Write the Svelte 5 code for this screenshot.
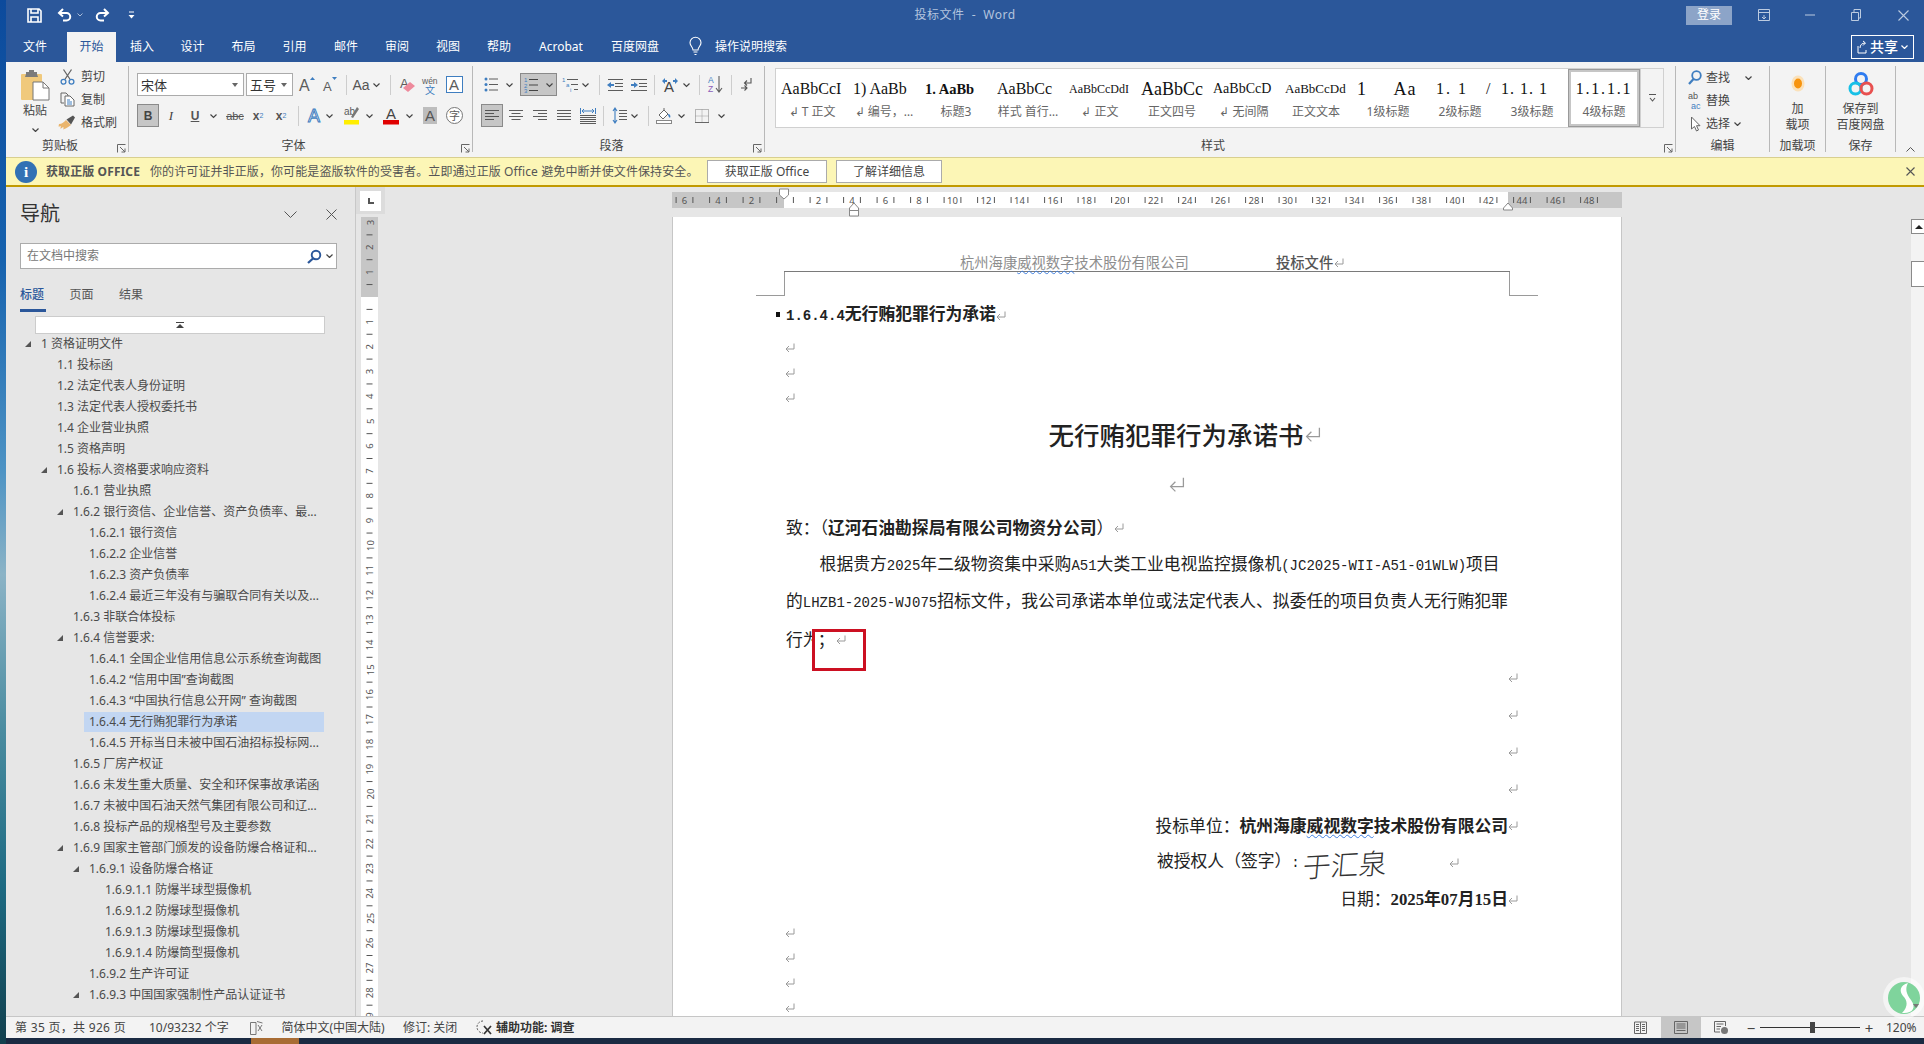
<script>
  const BL = '#3f7ec0', GR = '#5c5c5c';
  const lines = (arr, col = GR) => `<path d="${arr.map(([x1, y, x2]) => `M${x1} ${y}H${x2}`).join('')}" stroke="${col}" stroke-width="1" fill="none"/>`;
  const txt = (s, x, y, size, fill, extra = '') => `<text x="${x}" y="${y}" font-size="${size}" fill="${fill}" font-family="Liberation Sans, Noto Sans CJK SC, sans-serif" ${extra}>${s}</text>`;
  const W = '#ffffff';
  const ICON = {
    chev: [7, 4, `<path d="M.5 .5 3.5 3.5 6.5 .5" fill="none" stroke="#444" stroke-width="1.2"/>`],
    chevw: [7, 4, `<path d="M.5 .5 3.5 3.5 6.5 .5" fill="none" stroke="#fff" stroke-width="1.2"/>`],
    save: [15, 15, `<path d="M1 1H12L14 3V14H1Z M4 1V5H11V1 M4 14V9H11V14" fill="none" stroke="${W}" stroke-width="1.6"/>`],
    undo: [15, 14, `<path d="M6 1 2 5 6 8.5M2 5H9.5A3.7 3.7 0 0 1 9.5 12.5H6" fill="none" stroke="${W}" stroke-width="2"/>`],
    redo: [15, 14, `<path d="M9 1 13 5 9 8.5M13 5H5.5A3.7 3.7 0 0 0 5.500 12.5H9" fill="none" stroke="${W}" stroke-width="2"/>`],
    undoc: [6, 4, `<path d="M.5 .5 3 3 5.500 .5" fill="none" stroke="#a9bcd8" stroke-width="1"/>`],
    qat: [7, 8, `<path d="M1 1H6" stroke="${W}"/><path d="M.5 4H6.500L3.500 7.500Z" fill="${W}"/>`],
    bulb: [13, 19, `<path d="M4 13C4 10 1 9 1 5.800A5.500 5.500 0 0 1 12 5.800C12 9 9 10 9 13ZM4.500 15H8.500M5.500 17.500H7.500" fill="none" stroke="${W}" stroke-width="1.100"/>`],
    paste: [30, 32, `<rect x="1" y="5" width="21" height="26" rx="1" fill="#f0c97c"/><path d="M6 5V3H9V1H14V3H17V5L18 8H5Z" fill="#7b7b7b"/><path d="M13 13H23L29 19V31H13Z" fill="#fff" stroke="#777"/><path d="M23 13V19H29" fill="none" stroke="#777"/>`],
    cut: [15, 16, `<path d="M4.800 10.500 11.500 .5M10.200 10.500 3.500 .5" stroke="#666" stroke-width="1.300" fill="none"/><circle cx="3.500" cy="12.800" r="2.400" fill="none" stroke="${BL}" stroke-width="1.300"/><circle cx="11.500" cy="12.800" r="2.400" fill="none" stroke="${BL}" stroke-width="1.300"/>`],
    copy: [15, 15, `<path d="M1 1H6L8 3V4M1 1V11H4" fill="none" stroke="#666"/><path d="M5 4H10L14 8V14H5Z" fill="#fff" stroke="#666"/><path d="M7 8H10M7 10H12M7 12H12" stroke="${BL}"/>`],
    brush: [18, 15, `<path d="M1 9C4 9 6 7 8 5L13 10C10 12 8 14 5 14.500C6 13 5.500 12 5 12C4 13 3 13.500 2 13.500C3 12.500 3 11.500 2.500 11C2 11.500 1.500 11.500 .5 11.500Z" fill="#eab56d"/><path d="M8.500 4.500 15 .5 17 2.500 13 9.500Z" fill="#555"/>`],
    launch: [9, 9, `<path d="M.5 8.500V.5H8.500M3 3 8 8M8 4.500V8H4.500" fill="none" stroke="#666"/>`],
    grow: [18, 17, txt('A', 1, 15, 16, GR) + `<path d="M12 4H17L14.500 1Z" fill="${BL}"/>`],
    shrink: [16, 17, txt('A', 1, 15, 13, GR) + `<path d="M10 1H15L12.500 4Z" fill="${BL}"/>`],
    eraser: [17, 17, txt('A', 1, 12, 13, GR) + `<path d="M4 12 11 6 16 10 9 16Z" fill="#ee8a9c"/>`],
    wen: [17, 18, txt('wén', 0, 8, 8.5, GR) + txt('文', 3, 18, 10, BL)],
    abox: [17, 17, `<rect x=".5" y=".5" width="16" height="16" fill="#fff" stroke="${BL}"/>` + txt('A', 3, 14, 15, GR)],
    glow: [16, 18, `<text x="2" y="15" font-size="18" font-family="Liberation Sans,sans-serif" fill="#fff" stroke="${BL}" stroke-width="1">A</text>`],
    hl: [16, 19, txt('ab', 0, 9, 10, GR) + `<path d="M7 11 13 1 15 3 9 12Z" fill="#777"/><rect x="0" y="14" width="15" height="4.500" fill="#ffee00"/>`],
    ared: [16, 19, txt('A', 3, 13, 15, '#444') + `<rect x="0" y="14" width="16" height="4.500" fill="#e00000"/>`],
    agray: [14, 17, `<rect width="14" height="17" fill="#bdbdbd"/>` + txt('A', 2, 14, 15, '#555')],
    zi: [17, 17, `<circle cx="8.500" cy="8.500" r="8" fill="#fff" stroke="#777"/>` + txt('字', 3, 13, 11, GR)],
    bullets: [15, 15, `<circle cx="2" cy="2" r="1.500" fill="${BL}"/><circle cx="2" cy="7.500" r="1.500" fill="${BL}"/><circle cx="2" cy="13" r="1.500" fill="${BL}"/>` + lines([[5, 2, 14], [5, 7.5, 14], [5, 13, 14]])],
    numbers: [14, 16, txt('1', 0, 5, 6, BL) + txt('2', 0, 10.5, 6, BL) + txt('3', 0, 16, 6, BL) + lines([[5, 2.5, 14], [5, 8, 14], [5, 13.5, 14]], '#444')],
    multi: [17, 15, txt('1', 0, 5, 6, BL) + txt('a', 4, 10, 6, BL) + txt('i', 8, 15, 6, BL) + lines([[5, 2.5, 16], [9, 7.5, 16], [12, 12.5, 16]])],
    dec: [16, 12, lines([[1, .5, 16], [8, 4.5, 16], [8, 7.5, 16], [1, 11.5, 16]]) + `<path d="M0 6 4 3V9Z" fill="${BL}"/><path d="M3 6H7" stroke="${BL}" stroke-width="2"/>`],
    inc: [16, 12, lines([[0, .5, 16], [8, 4.5, 16], [8, 7.5, 16], [0, 11.5, 16]]) + `<path d="M7 6 3 3V9Z" fill="${BL}"/><path d="M0 6H4" stroke="${BL}" stroke-width="2"/>`],
    acc: [16, 15, txt('A', 2, 15, 15, '#444') + `<path d="M0 4 3 1V3H5V5H3V7ZM16 4 13 1V3H11V5H13V7Z" fill="${BL}"/>`],
    sort: [15, 17, txt('A', 0, 7, 8.5, BL) + txt('Z', 0, 16, 8.500, '#8b5fb8') + `<path d="M11 0V15M8 12 11 16 14 12" fill="none" stroke="${GR}" stroke-width="1.100"/>`],
    marks: [11, 14, `<path d="M10 0V5H4M6 2.500 3.500 5 6 7.500M0 10H6M3.500 7.500 6 10 3.500 12.500" fill="none" stroke="#555" stroke-width="1.100"/>`],
    left: [14, 11, lines([[0, .5, 14], [0, 3.5, 9], [0, 6.5, 14], [0, 9.5, 9]], '#555')],
    center: [14, 11, lines([[0, .5, 14], [2.5, 3.5, 11.5], [0, 6.5, 14], [2.5, 9.5, 11.5]])],
    right: [14, 11, lines([[0, .5, 14], [5, 3.5, 14], [0, 6.5, 14], [5, 9.5, 14]])],
    just: [14, 11, lines([[0, .5, 14], [0, 3.5, 14], [0, 6.5, 14], [0, 9.5, 14]])],
    dist: [16, 16, `<path d="M.5 0V6M15.500 0V6M2 3H14M4 1 2 3 4 5M12 1 14 3 12 5" fill="none" stroke="${BL}"/>` + lines([[0, 7.5, 16], [0, 9.5, 16], [0, 11.5, 16], [0, 13.5, 16], [0, 15.5, 16]])],
    spacing: [15, 17, `<path d="M3 1V16M1 4 3 1 5 4M1 13 3 16 5 13" fill="none" stroke="${BL}" stroke-width="1.100"/>` + lines([[7, 3.5, 15], [7, 6.5, 15], [7, 9.5, 15], [7, 12.5, 15]])],
    shade: [16, 16, `<path d="M3 7 8 2 12 6 7 11Z" fill="#fff" stroke="#666"/><path d="M8 2V0" stroke="#666"/><path d="M12 6C14 6 15 8 14 10 13 9 12 8 12 6Z" fill="${BL}"/><rect x=".5" y="12.500" width="15" height="3" fill="#fff" stroke="#888"/>`],
    borders: [14, 14, `<rect x=".5" y=".5" width="13" height="13" fill="none" stroke="#777" stroke-dasharray="1 1"/><path d="M7 .5V13.500M.5 7H13.500" stroke="#999" stroke-dasharray="1 1"/><path d="M0 13.500H14" stroke="#666"/>`],
    find: [14, 15, `<circle cx="8.500" cy="5.500" r="4.300" fill="none" stroke="${BL}" stroke-width="1.800"/><path d="M5.500 9 1 14" stroke="${BL}" stroke-width="2.200"/>`],
    replace: [15, 19, txt('ab', 0, 8, 9, '#555') + txt('ac', 3, 18, 9, BL)],
    select: [11, 16, `<path d="M1.500 1V13L4.500 10.500 6.500 15 8.500 14 6.500 9.700H10Z" fill="#fff" stroke="#666"/>`],
    dot: [14, 17, `<ellipse cx="7" cy="8.500" rx="6.500" ry="8" fill="#fdd9a0" opacity=".7"/><ellipse cx="7" cy="8.500" rx="4" ry="5" fill="#f7940f"/>`],
    baidu: [26, 26, `<circle cx="13" cy="8" r="5.500" fill="none" stroke="#2f7cf0" stroke-width="3"/><circle cx="7.500" cy="17.500" r="5.500" fill="none" stroke="#18c0e6" stroke-width="3"/><circle cx="18.500" cy="17.500" r="5.500" fill="none" stroke="#e8504f" stroke-width="3"/>`],
    ribbondisp: [12, 12, `<path d="M.5 .5H11.500V11.500H.5ZM.5 3.500H11.500M6 6V10M4 8 6 10 8 8" fill="none" stroke="#bccbe0"/>`],
    min: [10, 2, `<path d="M0 1H10" stroke="#bccbe0"/>`],
    restore: [10, 12, `<path d="M.5 3.500H7.500V11.500H.5ZM3 3.500V.5H9.500V9H7.500" fill="none" stroke="#bccbe0"/>`],
    close: [11, 11, `<path d="M.5 .5 10.500 10.500M10.500 .5 .5 10.500" stroke="#bccbe0" stroke-width="1.100"/>`],
    sharei: [10, 14, `<path d="M1 6V13H9V10M3 8C3 5 5 3 8 3M6 1 8.500 3 6 5.500" fill="none" stroke="#fff"/>`],
    xdark: [9, 9, `<path d="M.5 .5 8.500 8.500M8.500 .5 .5 8.500" stroke="#555" stroke-width="1.100"/>`],
    book: [13, 14, `<path d="M.5 1.500H6V13.500H.5ZM7 .5 12.500 2" fill="none" stroke="#777"/><path d="M8 4 12 10M12 4 8 10" stroke="#777"/>`],
    access: [16, 15, `<path d="M6 1A6 6 0 0 0 6 13" fill="none" stroke="#555" stroke-dasharray="2 1.500"/><path d="M7 6 14 14M14 6 7 14" stroke="#333" stroke-width="1.700"/>`],
    read: [13, 13, `<path d="M.5 1H6.500V12.500H.5ZM6.500 1H12.500V12.500H6.500ZM2 3.500H5M2 5.500H5M2 7.500H5M2 9.500H5M8 3.500H11M8 5.500H11M8 7.500H11M8 9.500H11" fill="none" stroke="#666"/>`],
    print: [14, 13, `<path d="M.5 .5H13.500V12.500H.5ZM2.500 3H11.500M2.500 5H11.500M2.500 7H11.500M2.500 9.500H11.500" fill="none" stroke="#666"/>`],
    web: [14, 13, `<path d="M.5 .5H11.500V5M.5 .5V11H6M2.500 3H9.500M2.500 5.500H7M2.500 8H6" fill="none" stroke="#666"/><circle cx="10.500" cy="9.500" r="3.500" fill="#777"/>`],
    search: [15, 15, `<circle cx="9" cy="6" r="4.300" fill="none" stroke="#2b579a" stroke-width="1.900"/><path d="M6 9.500 1 14" stroke="#2b579a" stroke-width="2.300"/>`],
    vee: [13, 7, `<path d="M.5 .5 6.500 6.500 12.500 .5" fill="none" stroke="#555"/>`],
    navx: [11, 11, `<path d="M.5 .5 10.500 10.500M10.500 .5 .5 10.500" stroke="#555"/>`],
    topbtn: [8, 6, `<path d="M0 .5H8" stroke="#444"/><path d="M0 6 4 2 8 6Z" fill="#444"/>`],
    tri: [6, 6, `<path d="M6 0V6H0Z" fill="#555"/>`],
    upc: [9, 5, `<path d="M.5 4.500 4.500 .5 8.500 4.500" fill="none" stroke="#555"/>`],
    morestyles: [7, 8, `<path d="M0 .5H7" stroke="#555"/><path d="M1 4 3.500 7 6 4" fill="none" stroke="#555" stroke-width="1.100"/>`]
  };

  const flow = (start, items) => {
    let p = start;
    return items.map((i) => {
      const x = i.c - i.w / 2;
      const ml = x - p;
      p = x + i.w;
      return { ...i, ml };
    });
  };
  const ic = (k, c, w = 18, cl = '') => ({ k, c, w, cl });
  const tx = (t, c, w, cl = '') => ({ t, c, w, cl });
  const sep = (c) => ({ c, w: 1, cl: 'sep' });
  const ch = (c) => ic('chev', c, 8);

  const qatRow = [
    ic('save', 34), ic('undo', 64), ic('undoc', 80, 7), ic('redo', 102), ic('qat', 131, 8),
    tx('投标文件  -  Word', 965, 140, 'title'),
    tx('登录', 1709, 46, 'signin'),
    ic('ribbondisp', 1764), ic('min', 1810), ic('restore', 1856), ic('close', 1903)
  ];
  const tabRow = [
    tx('文件', 35, 40), tx('开始', 91.5, 49, 'active'), tx('插入', 142, 40), tx('设计', 192.5, 40),
    tx('布局', 243.5, 40), tx('引用', 294.5, 40), tx('邮件', 346, 40), tx('审阅', 397, 40),
    tx('视图', 448, 40), tx('帮助', 499, 40), tx('Acrobat', 561, 56), tx('百度网盘', 635, 60),
    ic('bulb', 695), tx('操作说明搜索', 751, 76)
  ];
  const font1 = [
    { c: 190.5, w: 107, combo: '宋体' }, { c: 269.5, w: 47, combo: '五号' },
    ic('grow', 307), ic('shrink', 330), sep(346), tx('Aa', 361, 22, 'aa'), ch(376), sep(390),
    ic('eraser', 407), ic('wen', 430), ic('abox', 454)
  ];
  const font2 = [
    tx('B', 148, 22, 'on bold'), tx('I', 171, 14, 'ital'), tx('U', 195, 14, 'und'), ch(213), tx('abc', 235, 24, 'strike'),
    { t: 'x', sub: '2', c: 258, w: 16, cl: 'bx' }, { t: 'x', sup: '2', c: 281, w: 16, cl: 'bx' },
    sep(298), ic('glow', 314), ch(329), ic('hl', 352), ch(369), ic('ared', 391), ch(409), ic('agray', 430), ic('zi', 454)
  ];
  const para1 = [
    ic('bullets', 491), ch(509), { k: 'numbers', k2: 'chev', c: 538.5, w: 37, cl: 'on' }, ic('multi', 570), ch(585), sep(599),
    ic('dec', 615), ic('inc', 639), sep(654), ic('acc', 670), ch(686), sep(699), ic('sort', 715), sep(731), ic('marks', 746)
  ];
  const para2 = [
    ic('left', 492, 22, 'on'), ic('center', 516), ic('right', 540), ic('just', 564), ic('dist', 588), sep(603),
    ic('spacing', 619), ch(634), sep(648), ic('shade', 664), ch(681), ic('borders', 702), ch(721)
  ];
  const styles = [
    { p: 'AaBbCcI', l: '↲ T 正文', f: 's16' }, { p: '1) AaBb', l: '↲ 编号，…', f: 's16' }, { p: '1. AaBb', l: '标题3', f: 's145 strong' },
    { p: 'AaBbCc', l: '样式 首行…', f: 's16' }, { p: 'AaBbCcDdI', l: '↲ 正文', f: 's12' }, { p: 'AaBbCc', l: '正文四号', f: 's18' },
    { p: 'AaBbCcD', l: '↲ 无间隔', f: 's14' }, { p: 'AaBbCcDd', l: '正文文本', f: 's13' }, { p: '1     Aa', l: '1级标题', f: 's18 wide' },
    { p: '1. 1   /', l: '2级标题', f: 's16 wide w2' }, { p: '1. 1. 1', l: '3级标题', f: 's16 wide' }, { p: '1.1.1.1', l: '4级标题', f: 's16 wide w3', sel: true }
  ];
  const tree = [
    [0, '1 资格证明文件', 1], [1, '1.1 投标函'], [1, '1.2 法定代表人身份证明'], [1, '1.3 法定代表人授权委托书'], [1, '1.4 企业营业执照'], [1, '1.5 资格声明'],
    [1, '1.6 投标人资格要求响应资料', 1], [2, '1.6.1 营业执照'], [2, '1.6.2 银行资信、企业信誉、资产负债率、最...', 1], [3, '1.6.2.1 银行资信'], [3, '1.6.2.2 企业信誉'], [3, '1.6.2.3 资产负债率'],
    [3, '1.6.2.4 最近三年没有与骗取合同有关以及...'], [2, '1.6.3 非联合体投标'], [2, '1.6.4 信誉要求:', 1], [3, '1.6.4.1 全国企业信用信息公示系统查询截图'], [3, '1.6.4.2 “信用中国”查询截图'],
    [3, '1.6.4.3 “中国执行信息公开网” 查询截图'], [3, '1.6.4.4 无行贿犯罪行为承诺', 0, 1], [3, '1.6.4.5 开标当日未被中国石油招标投标网...'], [2, '1.6.5 厂房产权证'], [2, '1.6.6 未发生重大质量、安全和环保事故承诺函'],
    [2, '1.6.7 未被中国石油天然气集团有限公司和辽...'], [2, '1.6.8 投标产品的规格型号及主要参数'], [2, '1.6.9 国家主管部门颁发的设备防爆合格证和...', 1], [3, '1.6.9.1 设备防爆合格证', 1],
    [4, '1.6.9.1.1 防爆半球型摄像机'], [4, '1.6.9.1.2 防爆球型摄像机'], [4, '1.6.9.1.3 防爆球型摄像机'], [4, '1.6.9.1.4 防爆筒型摄像机'], [3, '1.6.9.2 生产许可证'], [3, '1.6.9.3 中国国家强制性产品认证证书', 1]
  ];
  const statusRow = [
    tx('第 35 页，共 926 页', 75, 120, 'lft st1'), tx('10/93232 个字', 191, 84, 'lft'), ic('book', 256, 14), tx('简体中文(中国大陆)', 334.5, 106, 'lft'),
    tx('修订: 关闭', 432, 58, 'lft'), ic('access', 485, 16), tx('辅助功能: 调查', 537, 82, 'lft bolder'),
    ic('read', 1640.5, 16), ic('print', 1681, 40, 'view-on'), ic('web', 1721, 16),
    tx('−', 1751, 10, 'zm'), { c: 1810, w: 100, cl: 'slider' }, tx('+', 1869, 10, 'zm'), tx('120%', 1902, 32, 'lft')
  ];

  const hx = (n) => 113 + n * 16.75;
  const hNums = [-6, -4, -2, 0, 2, 4, 6, 8, 10, 12, 14, 16, 18, 20, 22, 24, 26, 28, 30, 32, 34, 36, 38, 40, 42, 44, 46, 48];
  const vy = (n) => 80 + n * 24.85;
  const vNums = Array.from({ length: 33 }, (_, i) => i - 3);
</script>

{#snippet icon(k)}
  <svg width={ICON[k][0]} height={ICON[k][1]} viewBox="0 0 {ICON[k][0]} {ICON[k][1]}">{@html ICON[k][2]}</svg>
{/snippet}

{#snippet row(start, items, cls)}
  <div class="row {cls}">
    {#each flow(start, items) as i}
      <span class="cell {i.cl || ''}" style:margin-left="{i.ml}px" style:width="{i.w}px">
        {#if i.combo}
          <span class="combo"><span>{i.combo}</span><i class="caret"></i></span>
        {:else if i.k}
          {@render icon(i.k)}
          {#if i.k2}<span class="k2">{@render icon(i.k2)}</span>{/if}
        {:else if i.t}
          {i.t}{#if i.sub}<sub>{i.sub}</sub>{/if}{#if i.sup}<sup>{i.sup}</sup>{/if}
        {/if}
      </span>
    {/each}
  </div>
{/snippet}

{#snippet mark(big)}
  <svg class="ret" class:big width={big ? 16 : 10} height={big ? 16 : 10} viewBox="0 0 10 10"><path d="M9 .5V6H1M4 3 1 6 4 9" fill="none" stroke="#9a9a9a" stroke-width={big ? 0.8 : 1}/></svg>
{/snippet}

<div class="screen">
  <div class="wall"></div>
  <div class="win">
    {@render row(6, qatRow, 'qat')}
    <div class="tabline">
      {@render row(6, tabRow, 'tabs')}
      <button class="share">{@render icon('sharei')}<b>共享</b>{@render icon('chevw')}</button>
    </div>

    <div class="ribbon">
      <section class="grp clip">
        <div class="body clipbody">
          <div class="paste">{@render icon('paste')}<span>粘贴</span>{@render icon('chev')}</div>
          <div class="mini">
            <div class="tool"><span class="ti">{@render icon('cut')}</span>剪切</div>
            <div class="tool"><span class="ti">{@render icon('copy')}</span>复制</div>
            <div class="tool"><span class="ti">{@render icon('brush')}</span>格式刷</div>
          </div>
        </div>
        <div class="glabel"><span>剪贴板</span><span class="launch">{@render icon('launch')}</span></div>
      </section>
      <section class="grp fontg">
        <div class="body">{@render row(129, font1, 'r')}{@render row(129, font2, 'r')}</div>
        <div class="glabel"><span>字体</span><span class="launch">{@render icon('launch')}</span></div>
      </section>
      <section class="grp parag">
        <div class="body">{@render row(473, para1, 'r')}{@render row(473, para2, 'r')}</div>
        <div class="glabel"><span>段落</span><span class="launch">{@render icon('launch')}</span></div>
      </section>
      <section class="grp styleg">
        <div class="body stylebody">
          <div class="gallery">
            {#each styles as s}
              <div class="style" class:sel={s.sel}>
                <div class="prev {s.f}">{s.p}</div>
                <div class="slabel">{s.l}</div>
              </div>
            {/each}
            <div class="gscroll">{@render icon('morestyles')}</div>
          </div>
        </div>
        <div class="glabel"><span>样式</span><span class="launch">{@render icon('launch')}</span></div>
      </section>
      <section class="grp editg">
        <div class="body editbody">
          <div class="tool"><span class="te">{@render icon('find')}</span>查找<span class="tc long">{@render icon('chev')}</span></div>
          <div class="tool"><span class="te">{@render icon('replace')}</span>替换</div>
          <div class="tool"><span class="te">{@render icon('select')}</span>选择<span class="tc">{@render icon('chev')}</span></div>
        </div>
        <div class="glabel center"><span>编辑</span></div>
      </section>
      <section class="grp addg">
        <div class="body big"><span class="bigicon">{@render icon('dot')}</span><span>加</span><span>载项</span></div>
        <div class="glabel center"><span>加载项</span></div>
      </section>
      <section class="grp saveg">
        <div class="body big"><span class="bigicon">{@render icon('baidu')}</span><span>保存到</span><span>百度网盘</span></div>
        <div class="glabel center"><span>保存</span></div>
      </section>
      <div class="collapse">{@render icon('upc')}</div>
    </div>

    <div class="infobar">
      <span class="iicon">i</span>
      <b>获取正版 OFFICE</b>
      <span class="msg">你的许可证并非正版，你可能是盗版软件的受害者。立即通过正版 Office 避免中断并使文件保持安全。</span>
      <button class="ibtn btn1">获取正版 Office</button>
      <button class="ibtn btn2">了解详细信息</button>
      <span class="ix">{@render icon('xdark')}</span>
    </div>

    <div class="main">
      <aside class="nav">
        <div class="navhead"><h2>导航</h2><span class="nv">{@render icon('vee')}</span><span class="nx">{@render icon('navx')}</span></div>
        <div class="searchbox"><span>在文档中搜索</span>{@render icon('search')}<span class="sc">{@render icon('chev')}</span></div>
        <div class="navtabs"><span class="cur">标题</span><span>页面</span><span>结果</span></div>
        <div class="upbtn">{@render icon('topbtn')}</div>
        <ul class="tree">
          {#each tree as [lvl, text, tri, sel]}
            <li class="lv{lvl}">
              <span class="tw">{#if tri}{@render icon('tri')}{/if}</span>
              <span class="node" class:selected={sel}>{text}</span>
            </li>
          {/each}
        </ul>
      </aside>

      <div class="vrule">
        <div class="corner"><div class="cornerin"><span class="ell"></span></div></div>
        <svg class="vsvg" width="17" height="800" viewBox="0 0 17 800">
          <rect width="17" height="80" fill="#c6c6c6"/>
          <rect y="80" width="17" height="720" fill="#fff"/>
          {#each vNums as n}
            {#if n !== 0}
              <text transform="rotate(-90 9 {vy(n)})" x="9" y={vy(n) + 3.500} text-anchor="middle" font-size="9.500" fill="#555" font-family="Noto Sans, sans-serif">{Math.abs(n)}</text>
            {/if}
            <path d="M5.500 {vy(n) + 12.400}H11.500" stroke="#555"/>
          {/each}
        </svg>
      </div>

      <div class="canvas">
        <svg class="hsvg" width="950" height="30" viewBox="0 0 950 30">
          <rect y="5" width="112" height="16" fill="#c6c6c6"/>
          <rect x="112" y="5" width="724" height="16" fill="#fff"/>
          <rect x="836" y="5" width="114" height="16" fill="#c6c6c6"/>
          {#each hNums as n}
            {#if n !== 0}
              <text x={hx(n)} y="17" text-anchor="middle" font-size="9.500" fill="#555" font-family="Noto Sans, sans-serif">{Math.abs(n)}</text>
            {/if}
            <path d="M{hx(n) - 8.400} 10V16M{hx(n) + 8.400} 10V16" stroke="#555"/>
          {/each}
          <path d="M107.500 2H116.500V8L112 12 107.500 8Z" fill="#fff" stroke="#888"/>
          <path d="M177.500 21L182 16 186.500 21V29H177.500ZM177.500 23.500H186.500" fill="#fff" stroke="#888"/>
          <path d="M831.500 21L836 16 840.500 21V23H831.500Z" fill="#fff" stroke="#888"/>
        </svg>
        <article class="page">
          <header class="dochead"><span class="hgray">杭州海康<u>威视数字</u>技术股份有限公司</span><span class="hdark">投标文件</span>{@render mark()}</header>
          <div class="crop"><i class="cl"></i><i class="cr"></i></div>

          <div class="s h1"><span class="sq"></span><strong><span class="lat">1.6.4.4</span>无行贿犯罪行为承诺</strong>{@render mark()}</div>
          <div class="s">{@render mark()}</div>
          <div class="s">{@render mark()}</div>
          <div class="s">{@render mark()}</div>
          <div class="tt t1"><span>无行贿犯罪行为承诺书</span>{@render mark(true)}</div>
          <div class="tt t2">{@render mark(true)}</div>
          <div class="to">致：（<strong>辽河石油勘探局有限公司物资分公司</strong>）{@render mark()}</div>
          <p class="l indent para1"><span>根据贵方<span class="lat">2025</span>年二级物资集中采购<span class="lat">A51</span>大类工业电视监控摄像机<span class="lat">(JC2025-WII-A51-01WLW)</span>项目</span></p>
          <p class="l"><span>的<span class="lat">LHZB1-2025-WJ075</span>招标文件，我公司承诺本单位或法定代表人、拟委任的项目负责人无行贿犯罪</span></p>
          <p class="l"><span>行<span class="cut">为</span><span class="semi">；</span></span>{@render mark()}</p>
          <div class="l rt gap1">{@render mark()}</div>
          <div class="l rt">{@render mark()}</div>
          <div class="l rt">{@render mark()}</div>
          <div class="l rt">{@render mark()}</div>
          <div class="l rt"><span>投标单位：<strong>杭州海康<u>威视数字</u>技术股份有限公司</strong></span>{@render mark()}</div>
          <div class="l sign"><span>被授权人（签字）<span class="lat">:</span></span><span class="signature">于汇泉</span>{@render mark()}</div>
          <div class="l rt"><span>日期：<strong><span class="num">2025</span>年<span class="num">07</span>月<span class="num">15</span>日</strong></span>{@render mark()}</div>
          <div class="s gap2">{@render mark()}</div>
          <div class="s">{@render mark()}</div>
          <div class="s">{@render mark()}</div>
          <div class="s">{@render mark()}</div>

          <div class="redbox"></div>
        </article>
      </div>

      <div class="vscroll">
        <div class="sup"><i></i></div>
        <div class="sthumb"></div>
      </div>
    </div>

    {@render row(6, statusRow, 'status')}
    <div class="strip"><i></i></div>
  </div>

  <div class="floatball">
    <div class="ballin"><svg width="32" height="32" viewBox="0 0 32 32"><path d="M20 1C12 3 11 9 15 14C19 18 21 24 14 31C24 32 29 26 23 18C18 12 17 6 20 1Z" fill="#fff"/></svg></div>
    <i class="balltri"></i>
  </div>
</div>

<style>
  :global(body) { margin: 0; background: #e6e6e6; }
  :global(*) { box-sizing: border-box; }
  .screen {
    position: relative; display: flex; width: 1924px; height: 1044px; overflow: hidden;
    font: 12px/16px "Noto Sans", "Noto Sans CJK SC", sans-serif; color: #444;
  }
  .wall { width: 6px; background: linear-gradient(#0c4a9c 0%, #1662ae 25%, #4d93c4 45%, #8bb3c6 55%, #4a8ca0 70%, #1d6a82 85%, #12404e 100%); }
  .win { width: 1918px; display: flex; flex-direction: column; }

  .row { display: flex; align-items: center; }
  .cell { display: flex; align-items: center; justify-content: center; flex: none; white-space: nowrap; }
  .cell svg { display: block; flex: none; overflow: visible; }

  .qat { height: 32px; background: #2b579a; padding-bottom: 2px; color: #fff; }
  .title { color: #b3c4de; white-space: pre; letter-spacing: .5px; }
  .signin { height: 19px; background: #8ca4c8; color: #fff; }
  .tabline { position: relative; height: 30px; background: #2b579a; }
  .tabs { height: 30px; color: #fff; }
  .tabs .cell { height: 30px; padding-bottom: 1px; }
  .tabs .active { background: #f3f3f3; color: #2b579a; }
  .share {
    position: absolute; left: 1845px; top: 3px; width: 63px; height: 24px; display: flex; align-items: center; justify-content: center; gap: 3px;
    background: transparent; border: 1px solid #fff; color: #fff; padding: 0; font: inherit;
  }
  .share b { font-weight: 500; font-size: 14px; }

  .ribbon { display: flex; height: 95px; background: #f3f3f3; padding-top: 4px; }
  .grp { height: 86px; flex: none; border-right: 1px solid #b8b8b8; display: flex; flex-direction: column; }
  .clip { width: 123px; }
  .fontg { width: 344px; }
  .parag { width: 292px; }
  .styleg { width: 911px; }
  .editg { width: 94px; }
  .addg { width: 56px; }
  .saveg { width: 70px; }
  .body { height: 72px; flex: none; padding-top: 7px; display: flex; flex-direction: column; gap: 8px; color: #444; }
  .r { height: 23px; }
  .glabel { height: 14px; display: flex; line-height: 16px; color: #444; }
  .glabel > span:first-child { flex: 1; text-align: center; }
  .launch { width: 14px; display: flex; align-items: center; justify-content: center; padding-top: 6px; }
  .launch svg { display: block; }

  .clipbody { flex-direction: row; padding: 0; gap: 0; }
  .paste { width: 44px; margin-left: 7px; display: flex; flex-direction: column; align-items: center; padding-top: 3px; }
  .paste span { margin-top: 2px; }
  .paste svg:last-child { margin-top: 9px; }
  .mini { display: flex; flex-direction: column; margin-top: -1px; }
  .tool { height: 23px; display: flex; align-items: center; white-space: nowrap; }
  .ti { width: 18px; margin-right: 5px; margin-left: 1px; display: flex; justify-content: center; }

  .sep { height: 20px; background: #cdcdcd; }
  .on { height: 23px; background: #c6c6c6; border: 1px solid #8a8a8a; gap: 8px; }
  .bold { font: 700 12px "Liberation Sans", sans-serif; color: #444; }
  .ital { font: italic 13px "Liberation Serif", serif; }
  .und { font: 700 12px "Liberation Sans", sans-serif; text-decoration: underline; color: #555; }
  .strike { font: 11px "Liberation Sans", sans-serif; text-decoration: line-through; color: #555; }
  .bx { font: 700 12px "Liberation Sans", sans-serif; color: #555; }
  .bx sub, .bx sup { font-size: 7px; font-weight: 400; color: #3f7ec0; line-height: 0; }
  .aa { font: 14px "Liberation Sans", sans-serif; color: #555; }
  .combo { width: 100%; height: 23px; display: flex; align-items: center; justify-content: space-between; padding: 0 5px 0 3px; background: #fff; border: 1px solid #ababab; color: #333; font-size: 13px; }
  .caret { width: 0; height: 0; border: 3px solid transparent; border-top: 4px solid #666; border-bottom: 0; }

  .stylebody { padding: 2px 0 0 10px; }
  .gallery { width: 889px; height: 60px; display: flex; background: #fff; border: 1px solid #d0d0d0; }
  .style { width: 72px; flex: none; height: 58px; padding-top: 7px; text-align: center; border: 3px solid transparent; }
  .style.sel { border-color: #c6c6c6; outline: 1px solid #9a9a9a; outline-offset: -1px; }
  .prev { width: 62px; margin: 0 auto; height: 20px; overflow: hidden; white-space: nowrap; line-height: 20px; color: #111; font-family: "Liberation Serif", serif; text-align: left; }
  .s12 { font-size: 12px; } .s13 { font-size: 13px; } .s14 { font-size: 14px; } .s145 { font-size: 14.5px; } .s16 { font-size: 16px; } .s18 { font-size: 18px; }
  .strong { font-weight: 700; }
  .wide { letter-spacing: 1px; white-space: pre; }
  .w2 { letter-spacing: 2px; padding-left: 7px; }
  .w3 { letter-spacing: 1.800px; text-align: center; }
  .slabel { margin-top: 5px; line-height: 16px; height: 16px; color: #666; white-space: nowrap; }
  .gscroll { flex: 1; border-left: 1px solid #d0d0d0; background: #f3f3f3; display: flex; align-items: flex-start; justify-content: center; padding-top: 25px; }

  .editbody { padding: 0; gap: 0; }
  .te { width: 22px; margin-left: 8px; margin-right: 0; display: flex; justify-content: center; }
  .tc { margin-left: 4px; display: flex; }
  .tc.long { margin-left: 15px; }
  .big { padding-top: 0; gap: 0; align-items: center; }
  .bigicon { height: 35px; display: flex; align-items: center; justify-content: center; }
  .glabel.center { justify-content: center; }
  .collapse { width: 28px; display: flex; justify-content: center; padding-top: 81px; }
  .collapse svg { display: block; }

  .infobar { height: 30px; display: flex; align-items: center; background: #fcf6b6; border-top: 1px solid #d8cf8f; border-bottom: 2px solid #c19a00; }
  .iicon { width: 22px; height: 22px; margin-left: 9px; border-radius: 50%; background: #3271b4; color: #fff; font: 700 15px/22px "Liberation Serif", serif; text-align: center; flex: none; }
  .infobar b { margin-left: 9px; color: #555; font-weight: 700; white-space: nowrap; letter-spacing: .1px; }
  .msg { margin-left: 10px; white-space: nowrap; color: #555; width: 541px; letter-spacing: .1px; }
  .ibtn { height: 23px; background: #fff; border: 1px solid #ababab; color: #444; font: inherit; padding: 0; }
  .btn1 { width: 120px; margin-left: 16px; }
  .btn2 { width: 106px; margin-left: 9px; }
  .ix { margin-left: auto; margin-right: 9px; display: flex; }

  .main { height: 829px; display: flex; background: #e6e6e6; overflow: hidden; }
  .nav { width: 350px; flex: none; border-right: 1px solid #c8c8c8; padding-left: 14px; color: #444; }
  .navhead { display: flex; align-items: center; height: 36px; margin-top: 9px; width: 320px; }
  .navhead h2 { margin: 0; font-weight: 400; font-size: 20px; line-height: 36px; color: #333; flex: 1; }
  .nv { display: flex; margin-right: 29px; }
  .nx { display: flex; margin-right: 3px; }
  .searchbox { width: 317px; height: 26px; margin-top: 11px; display: flex; align-items: center; background: #fff; border: 1px solid #ababab; padding-left: 6px; color: #777; }
  .searchbox span:first-child { flex: 1; }
  .sc { margin: 0 3px 0 4px; display: flex; }
  .navtabs { display: flex; height: 43px; padding-top: 18px; gap: 25.500px; color: #555; }
  .navtabs span { width: 24px; white-space: nowrap; display: block; height: 25px; }
  .navtabs .cur { color: #2b579a; font-weight: 500; border-bottom: 3px solid #2b579a; width: 26px; margin-right: -2px; }
  .upbtn { width: 290px; height: 18px; margin-left: 15px; margin-top: 4px; display: flex; align-items: center; justify-content: center; background: #fff; border: 1px solid #ccc; }
  .tree { list-style: none; margin: -1px 0 0; padding: 0; }
  .tree li { height: 21px; display: flex; align-items: center; white-space: nowrap; }
  .tw { width: 16px; flex: none; display: flex; align-items: center; }
  .tw svg { display: block; }
  .lv0 { padding-left: 5px; }
  .lv1 { padding-left: 21px; }
  .lv2 { padding-left: 37px; }
  .lv3 { padding-left: 53px; }
  .lv4 { padding-left: 69px; }
  .node { color: #4a4a4a; height: 20px; line-height: 20px; }
  .selected { background: #c2d6f2; width: 240px; padding-left: 5px; margin-left: -5px; }

  .vrule { width: 30px; flex: none; padding-left: 5px; }
  .corner { width: 29px; height: 27px; margin-left: -5px; background: #dcdcdc; padding: 4px 0 0 4px; }
  .cornerin { width: 21px; height: 20px; background: #fff; display: flex; align-items: center; justify-content: center; }
  .ell { width: 6px; height: 6px; border-left: 2px solid #555; border-bottom: 2px solid #555; }
  .vsvg { display: block; margin-top: 3px; }

  .canvas { width: 1525px; flex: none; padding-left: 286px; }
  .hsvg { display: block; }
  .page {
    position: relative; width: 950px; height: 799px; background: #fff; overflow: hidden; border-left: 1px solid #c6c6c6; border-right: 1px solid #c6c6c6;
    padding-left: 113px; color: #222; font: 16.8px/20px "Noto Sans CJK SC", sans-serif;
  }
  .lat { font: inherit; font-family: "Liberation Mono", monospace; font-size: 14px; }
  .num { font-family: "Liberation Serif", serif; }
  strong { font-weight: 700; }
  u { text-decoration: underline wavy #3e7fe0 1px; text-underline-offset: 2px; }
  .ret { display: block; flex: none; margin-left: 1px; margin-top: 2px; }
  .dochead { width: 726px; height: 55px; margin-left: -2px; padding: 35px 0 0 176px; display: flex; align-items: center; border-bottom: 1px solid #7a7a7a; font-size: 14.300px; white-space: nowrap; }
  .hgray { color: #8e8e8e; width: 316px; }
  .hdark { color: #555; font-weight: 500; }
  .crop { width: 726px; height: 24px; margin-left: -2px; display: flex; justify-content: space-between; }
  .crop i { display: block; width: 29px; height: 24px; border-bottom: 1px solid #9a9a9a; }
  .cl { margin-left: -28px; border-right: 1px solid #9a9a9a; }
  .cr { margin-right: -28px; border-left: 1px solid #9a9a9a; }
  .s { height: 25px; display: flex; align-items: center; white-space: nowrap; }
  .s > .ret { margin-left: -1px; }
  .h1 { margin-top: 6px; margin-bottom: 7px; position: relative; }
  .h1 > .ret { margin-left: 0; }
  .sq { position: absolute; left: -10px; top: 10px; width: 4px; height: 5px; background: #111; }
  .tt { height: 50px; width: 724px; display: flex; align-items: center; justify-content: center; white-space: nowrap; }
  .t1 { padding-left: 73px; }
  .t2 { padding-left: 57px; }
  .tt span { font-size: 25.500px; font-weight: 500; color: #222; }
  .t1 .ret { margin-left: 1px; }
  .to { height: 35px; display: flex; align-items: center; white-space: pre; }
  .to .ret { margin-left: 1px; }
  .l { margin: 0; height: 37px; display: flex; align-items: center; white-space: nowrap; }
  .para1 { margin-top: 2px; }
  .indent { padding-left: 33.600px; }
  .cut { display: inline-block; width: 9px; overflow: hidden; vertical-align: bottom; }
  .semi { margin-left: 6px; }
  .rt { justify-content: flex-end; width: 732px; }
  .rt .ret { margin-left: 0; }
  .gap1 { margin-top: 1px; }
  .gap2 { margin-top: 2px; }
  .sign { padding-left: 371px; }
  .signature { font-size: 28px; width: 148px; padding-left: 3px; color: #333; font-weight: 300; transform: rotate(-3deg) skewX(-8deg); line-height: 30px; }
  .redbox { position: absolute; left: 139px; top: 412px; width: 54px; height: 42px; border: 3.500px solid #cc1022; }

  .vscroll { flex: 1; padding-top: 32px; background: linear-gradient(#e6e6e6 32px, #f3f3f3 32px); }
  .sup { width: 14px; height: 15px; background: #fff; border: 1px solid #8a8a8a; border-right: 0; display: flex; align-items: center; justify-content: center; }
  .sup i { width: 0; height: 0; border: 4px solid transparent; border-bottom: 4px solid #222; border-top: 0; }
  .sthumb { width: 14px; height: 26px; margin-top: 27px; background: #fff; border: 1px solid #8a8a8a; border-right: 0; }

  .status { height: 22px; background: #f3f3f3; border-top: 1px solid #c6c6c6; color: #444; }
  .lft { justify-content: flex-start; }
  .st1 { letter-spacing: .3px; }
  .bolder { font-weight: 700; color: #333; }
  .view-on { height: 21px; background: #c6c6c6; }
  .zm { font-size: 15px; }
  .slider { height: 1px; background: #333; position: relative; }
  .slider::after { content: ""; position: absolute; left: 50px; top: -5px; width: 5px; height: 11px; background: #444; }
  .strip { height: 6px; background: #1a2a42; }
  .strip i { display: block; width: 48px; height: 6px; margin-left: 245px; background: #a86c34; }

  .floatball { position: absolute; left: 1883px; top: 977px; width: 42px; height: 42px; border-radius: 50%; background: rgba(255, 255, 255, 0.55); }
  .ballin { position: absolute; left: 5px; top: 5px; width: 32px; height: 32px; border-radius: 50%; overflow: hidden; background: #7fd49c; }
  .ballin svg { display: block; }
  .balltri { position: absolute; left: 30px; top: 27px; width: 0; height: 0; border: 3px solid transparent; border-top: 4px solid #777; border-bottom: 0; }
</style>
